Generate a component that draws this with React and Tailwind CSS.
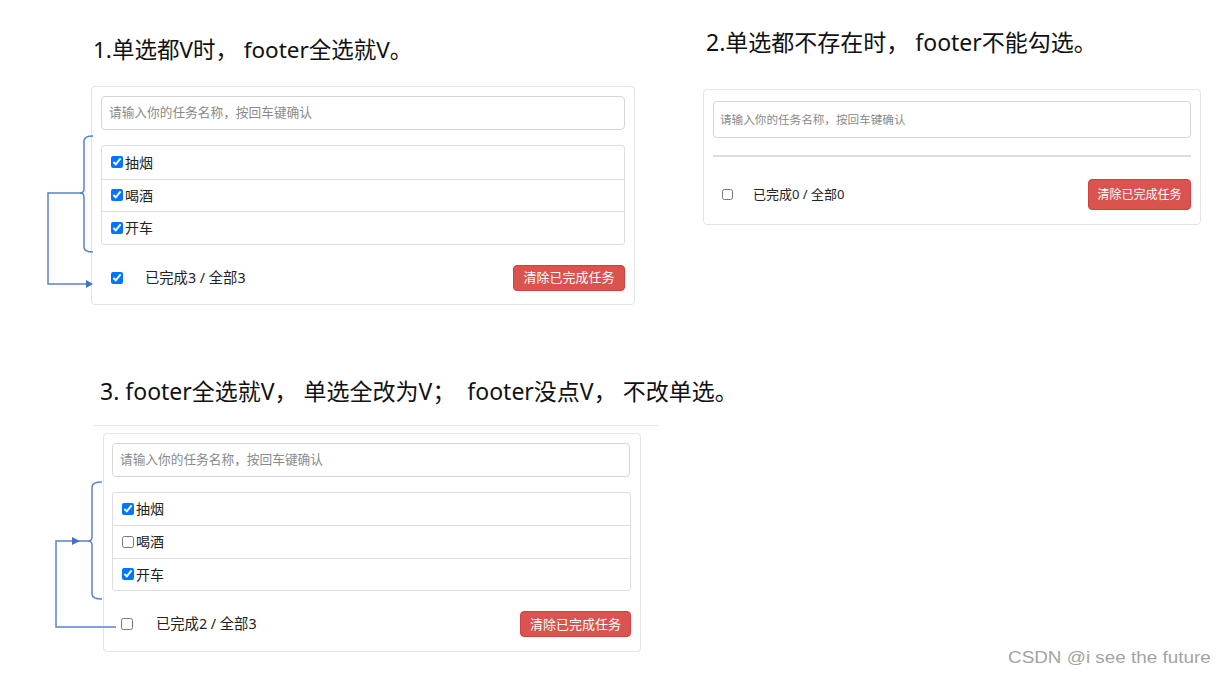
import React from "react";

const CJK = "font-['Noto_Sans','Noto_Sans_CJK_SC',sans-serif]";

function Box({ checked, size = "w-[12px] h-[12px]" }) {
  return (
    <input
      type="checkbox"
      defaultChecked={checked}
      className={`${size} m-0 shrink-0 accent-[#0075ff]`}
    />
  );
}

function Rows({ items, className }) {
  return (
    <ul className={`border border-[#dddddd] rounded-[3px] ${className}`}>
      {items.map((it, i) => (
        <li
          key={i}
          className={`h-[32.5px] flex items-center pl-[9px] gap-[2px] text-[14px] text-[#222] ${
            i > 0 ? "border-t border-[#dddddd]" : ""
          }`}
        >
          <Box checked={it.done} />
          <span>{it.name}</span>
        </li>
      ))}
    </ul>
  );
}

function Input({ className, textClass }) {
  return (
    <div
      className={`border border-[#d6d6d6] rounded-[4px] flex items-center text-[#8a8a8a] ${className} ${textClass}`}
    >
      请输入你的任务名称，按回车键确认
    </div>
  );
}

export default function App() {
  return (
    <div className={`relative w-[1228px] h-[675px] bg-white overflow-hidden ${CJK}`}>
      {/* top row */}
      <div className="flex items-start">
        {/* case 1 */}
        <div className="ml-[91px] w-[544px] pt-[35px]">
          <h2 className="pl-[2px] text-[22.5px] leading-[30px] text-[#111] font-normal whitespace-pre">
            1.单选都V时， footer全选就V。
          </h2>
          <div className="mt-[21px] w-[544px] border border-[#e3e3e3] rounded-[4px] p-[9px] pb-[13px]">
            <Input className="h-[34px] pl-[7px]" textClass="text-[12.7px]" />
            <Rows
              className="mt-[15px]"
              items={[
                { name: "抽烟", done: true },
                { name: "喝酒", done: true },
                { name: "开车", done: true },
              ]}
            />
            <div className="mt-[20px] flex items-center justify-between">
              <div className="flex items-center pl-[10px]">
                <Box checked />
                <span className="ml-[22px] text-[14.3px] text-[#222]">已完成3 / 全部3</span>
              </div>
              <button className="w-[112px] h-[26px] rounded-[4px] bg-[#d9534f] border border-[#d43f3a] text-white text-[13px] leading-none">
                清除已完成任务
              </button>
            </div>
          </div>
        </div>

        {/* case 2 */}
        <div className="ml-[68px] w-[498px] pt-[27px]">
          <h2 className="pl-[3px] text-[23px] leading-[30px] text-[#111] font-normal whitespace-pre">
            2.单选都不存在时， footer不能勾选。
          </h2>
          <div className="mt-[32px] w-[498px] border border-[#e3e3e3] rounded-[4px] px-[9px] pt-[11px] pb-[14px]">
            <Input className="h-[37px] pl-[6px]" textClass="text-[11.6px]" />
            <div className="mt-[17px] border border-[#dddddd]" />
            <div className="mt-[22px] flex items-center justify-between">
              <div className="flex items-center pl-[9px]">
                <Box checked={false} size="w-[11px] h-[11px]" />
                <span className="ml-[20px] text-[13px] text-[#222]">已完成0 / 全部0</span>
              </div>
              <button className="w-[103px] h-[31px] rounded-[4px] bg-[#d9534f] border border-[#d43f3a] text-white text-[12px] leading-none">
                清除已完成任务
              </button>
            </div>
          </div>
        </div>
      </div>

      {/* case 3 */}
      <div className="mt-[70px]">
        <h2 className="ml-[100px] text-[23px] leading-[32px] text-[#111] font-normal whitespace-pre">
          3. footer全选就V， 单选全改为V；  footer没点V， 不改单选。
        </h2>
        <div className="mt-[18px] ml-[93px] w-[566px] h-px bg-[#e6e6e6]" />
        <div className="mt-[7px] ml-[103px] w-[538px] border border-[#e3e3e3] rounded-[4px] pl-[8px] pr-[9px] pt-[9px] pb-[14px]">
          <Input className="h-[34px] pl-[7px] mr-[1px]" textClass="text-[12.7px]" />
          <Rows
            className="mt-[15px]"
            items={[
              { name: "抽烟", done: true },
              { name: "喝酒", done: false },
              { name: "开车", done: true },
            ]}
          />
          <div className="mt-[20px] flex items-center justify-between">
            <div className="flex items-center pl-[9px]">
              <Box checked={false} />
              <span className="ml-[23px] text-[14.3px] text-[#222]">已完成2 / 全部3</span>
            </div>
            <button className="w-[111px] h-[26px] rounded-[4px] bg-[#d9534f] border border-[#d43f3a] text-white text-[13px] leading-none">
              清除已完成任务
            </button>
          </div>
        </div>
      </div>

      {/* annotation brackets & arrows */}
      <svg
        className="absolute left-0 top-0 pointer-events-none"
        width="1228"
        height="675"
        viewBox="0 0 1228 675"
        fill="none"
      >
        <g stroke="#5b82cc" strokeWidth="1.5" fill="none">
          <path d="M93 136 Q84 136 84 141 L84 189 Q84 193 80 193 Q84 193 84 197 L84 247 Q84 252 93 252" />
          <path d="M82 193 L48 193 L48 284 L87 284" />
          <path d="M102 482 Q92 482 92 487 L92 537 Q92 541 88 541 Q92 541 92 545 L92 594 Q92 599 102 599" />
          <path d="M116 627 L56 627 L56 541 L88 541" />
        </g>
        <g fill="#4472c4">
          <polygon points="86,280 93,284 86,288" />
          <polygon points="72,537 80,541 72,545" />
        </g>
      </svg>

      {/* watermark */}
      <div className="absolute left-[1008px] top-[648px] origin-left scale-x-[1.18] font-['Liberation_Sans',Arial,sans-serif] text-[16px] leading-[20px] text-[#a3a3a3] whitespace-nowrap">
        CSDN @i see the future
      </div>
    </div>
  );
}
